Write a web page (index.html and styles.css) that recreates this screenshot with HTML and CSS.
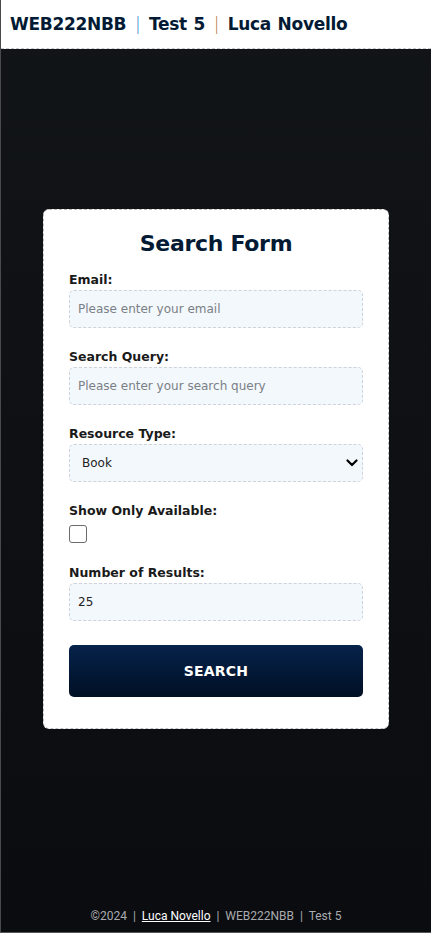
FILE: index.html
```html
<!DOCTYPE html>
<html lang="en">
<head>
<meta charset="utf-8">
<title>Search Form</title>
<link rel="stylesheet" href="styles.css">
</head>
<body>
<div class="page">
  <header class="site-header">
    <h1 class="brand">WEB222NBB <span class="sep sep-blue">|</span> Test 5 <span class="sep sep-orange">|</span> Luca Novello</h1>
  </header>
  <main class="main">
    <form class="card">
      <h2 class="card-title">Search Form</h2>
      <div class="field">
        <label class="label" for="email">Email:</label>
        <input class="input" id="email" type="email" placeholder="Please enter your email">
      </div>
      <div class="field">
        <label class="label" for="query">Search Query:</label>
        <input class="input" id="query" type="text" placeholder="Please enter your search query">
      </div>
      <div class="field">
        <label class="label" for="type">Resource Type:</label>
        <div class="select-wrap">
          <select class="input select" id="type">
            <option>Book</option>
          </select>
          <svg class="chev" width="12" height="8" viewBox="0 0 12 8"><path d="M1.5 1.5 L6 6 L10.5 1.5" fill="none" stroke="#000" stroke-width="2.2" stroke-linecap="round" stroke-linejoin="round"/></svg>
        </div>
      </div>
      <div class="field">
        <label class="label" for="avail">Show Only Available:</label>
        <span class="checkbox" id="avail"></span>
      </div>
      <div class="field">
        <label class="label" for="num">Number of Results:</label>
        <input class="input" id="num" type="text" value="25">
      </div>
      <button class="btn" type="button">SEARCH</button>
    </form>
  </main>
  <footer class="footer">©2024 &nbsp;|&nbsp; <a class="footer-link" href="#">Luca Novello</a> &nbsp;|&nbsp; WEB222NBB &nbsp;|&nbsp; Test 5</footer>
</div>
</body>
</html>
```
FILE: styles.css
```css
* { box-sizing: border-box; }
html, body { margin: 0; padding: 0; }
body {
  font-family: "DejaVu Sans", "Open Sans", sans-serif;
  background: #0b0d11;
}
.page {
  min-height: 933px;
  display: flex;
  flex-direction: column;
  border-left: 1px solid #4a4a4a;
  border-bottom: 1px solid #555;
  background: linear-gradient(#121518, #0a0c10);
}
.site-header {
  background: #fff;
  height: 49px;
  border-bottom: 1px dashed #c8c8c8;
  display: flex;
  align-items: center;
  padding-left: 9px;
}
.brand {
  margin: 0;
  font-size: 17px;
  font-weight: 800;
  color: #021a33;
  letter-spacing: -0.3px;
  word-spacing: 1px;
}
.sep { font-weight: 300; padding: 0 2px; }
.sep-blue { color: #2a8ccf; }
.sep-orange { color: #b57740; }
.main {
  flex: 1;
  display: flex;
  align-items: center;
  justify-content: center;
  padding-bottom: 2px;
}
.card {
  width: 346px;
  background: #fff;
  border: 1px dashed #bdbdbd;
  border-radius: 6px;
  padding: 21px 25px 31px 25px;
  display: flex;
  flex-direction: column;
}
.card-title {
  margin: 0 0 16px;
  text-align: center;
  font-size: 22px;
  font-weight: 900;
  color: #021a33;
  letter-spacing: -0.3px;
}
.field {
  display: flex;
  flex-direction: column;
  margin-bottom: 21px;
}
.label {
  font-size: 12.5px;
  font-weight: 600;
  color: #1a1a1a;
  margin-bottom: 3px;
}
.input {
  height: 38px;
  width: 100%;
  border: 1px dashed #cdd3d9;
  border-radius: 5px;
  background: #f3f8fd;
  padding: 0 8px;
  font-family: "DejaVu Sans", sans-serif;
  font-size: 12px;
  color: #222;
  outline: none;
}
.input::placeholder { color: #7a7f85; }
.select-wrap { position: relative; }
.select {
  appearance: none;
  -webkit-appearance: none;
  padding-left: 12px;
  color: #222;
}
.chev { position: absolute; right: 5px; top: 15px; }
.checkbox {
  display: block;
  width: 18px;
  height: 18px;
  border: 1.5px solid #6b6b6b;
  border-radius: 3px;
  margin-top: 4px;
  margin-bottom: 1px;
}
.btn {
  margin-top: 3px;
  height: 52px;
  border: none;
  border-radius: 5px;
  background: linear-gradient(#06234b, #000f24);
  color: #fff;
  font-family: "DejaVu Sans", sans-serif;
  font-weight: 800;
  font-size: 14px;
  letter-spacing: 0.2px;
}
.footer {
  text-align: center;
  color: #a9abae;
  font-family: Roboto, sans-serif;
  font-size: 12px;
  padding: 19px 0 9px;
}
.footer-link { color: #fff; text-decoration: underline; }
```
